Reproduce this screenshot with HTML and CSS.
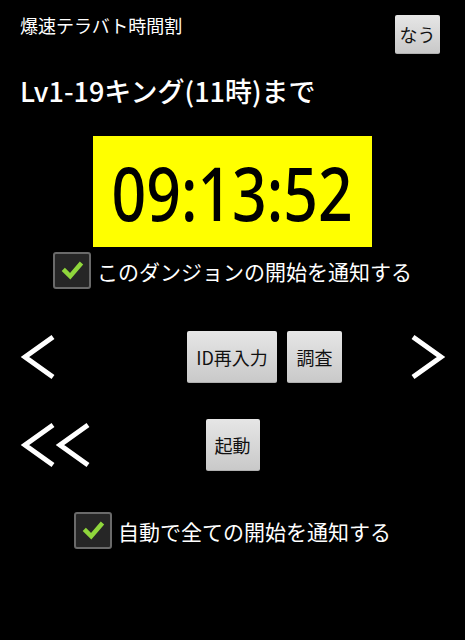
FILE: index.html
```html
<!DOCTYPE html>
<html lang="ja">
<head>
<meta charset="utf-8">
<link rel="stylesheet" href="styles.css">
</head>
<body>
<div class="screen">
  <div class="header">
    <div class="title">爆速テラバト時間割</div>
    <button class="btn btn-now">なう</button>
  </div>
  <div class="heading">Lv1-19キング(11時)まで</div>
  <div class="timer-wrap">
    <div class="timer"><span class="digits">09:13:52</span></div>
  </div>
  <div class="check-row first">
    <span class="checkbox"><svg viewBox="0 0 38 37" width="38" height="37"><polyline points="11,19 17,25 28,12" fill="none" stroke="#8fd63c" stroke-width="5" stroke-linecap="square" stroke-linejoin="miter"/></svg></span>
    <span class="check-label">このダンジョンの開始を通知する</span>
  </div>
  <div class="nav-row">
    <svg class="arrow" viewBox="0 0 36 46" width="36" height="46"><polyline points="33,3 5,23 33,43" fill="none" stroke="#fff" stroke-width="5"/></svg>
    <button class="btn btn-id">ID再入力</button>
    <button class="btn btn-check">調査</button>
    <svg class="arrow arrow-right" viewBox="0 0 36 46" width="36" height="46"><polyline points="3,3 31,23 3,43" fill="none" stroke="#fff" stroke-width="5"/></svg>
  </div>
  <div class="start-row">
    <svg class="arrow2" viewBox="0 0 72 46" width="72" height="46"><polyline points="33,3 5,23 33,43" fill="none" stroke="#fff" stroke-width="5"/><polyline points="68,3 40,23 68,43" fill="none" stroke="#fff" stroke-width="5"/></svg>
    <button class="btn btn-start">起動</button>
    <span></span>
  </div>
  <div class="check-row second">
    <span class="checkbox"><svg viewBox="0 0 38 37" width="38" height="37"><polyline points="11,19 17,25 28,12" fill="none" stroke="#8fd63c" stroke-width="5" stroke-linecap="square" stroke-linejoin="miter"/></svg></span>
    <span class="check-label">自動で全ての開始を通知する</span>
  </div>
</div>
</body>
</html>
```
FILE: styles.css
```css
html, body {
  margin: 0;
  padding: 0;
  background: #000;
}
body {
  width: 465px;
  height: 640px;
  overflow: hidden;
  font-family: "Noto Sans CJK JP", "Noto Sans", sans-serif;
  color: #fff;
}
.screen {
  display: flex;
  flex-direction: column;
}
.header {
  display: flex;
  justify-content: space-between;
  align-items: flex-start;
  padding: 15px 25px 0 20px;
}
.title {
  font-size: 18px;
  line-height: 22px;
  margin-top: -1px;
}
.btn {
  font-family: "Noto Sans CJK JP", "Noto Sans", sans-serif;
  font-size: 18px;
  color: #111;
  background: linear-gradient(#e6e6e6, #c9c9c9);
  border: none;
  border-bottom: 1px solid #b0b0b0;
  border-radius: 2px;
  padding: 0;
  display: flex;
  align-items: center;
  justify-content: center;
}
.btn-now {
  width: 45px;
  height: 39px;
}
.heading {
  font-size: 27px;
  line-height: 30px;
  padding-left: 20px;
  margin-top: 22px;
  font-weight: 500;
}
.timer-wrap {
  display: flex;
  justify-content: center;
  margin-top: 30px;
}
.timer {
  width: 279px;
  height: 111px;
  background: #ffff00;
  color: #000;
  display: flex;
  align-items: center;
  justify-content: center;
}
.digits {
  font-family: "Noto Sans", sans-serif;
  font-size: 74px;
  font-weight: 500;
  line-height: 1;
  transform: scaleX(0.82);
  display: inline-block;
  margin-top: 2px;
}
.check-row {
  display: flex;
  align-items: center;
  justify-content: center;
  gap: 6px;
}
.check-row.first {
  margin-top: 5px;
}
.check-row.second {
  margin-top: 41px;
}
.checkbox {
  width: 38px;
  height: 37px;
  box-sizing: border-box;
  border: 2px solid #6a6a6a;
  border-radius: 3px;
  background: #262626;
  display: flex;
  align-items: center;
  justify-content: center;
}
.checkbox svg {
  display: block;
}
.check-label {
  font-size: 21px;
  line-height: 30px;
}
.nav-row {
  display: flex;
  align-items: center;
  padding: 0 19px 0 20px;
  margin-top: 42px;
  height: 52px;
}
.arrow {
  display: block;
}
.btn-id {
  width: 90px;
  height: 52px;
  margin-left: 131px;
}
.btn-check {
  width: 55px;
  height: 52px;
  margin-left: 10px;
}
.arrow-right {
  margin-left: auto;
}
.start-row {
  display: grid;
  grid-template-columns: 1fr auto 1fr;
  align-items: center;
  margin-top: 36px;
  height: 52px;
}
.arrow2 {
  display: block;
  margin-left: 20px;
}
.btn-start {
  width: 54px;
  height: 52px;
}
```
